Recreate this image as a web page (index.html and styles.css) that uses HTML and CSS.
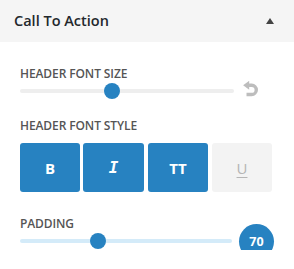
FILE: index.html
```html
<!DOCTYPE html>
<html lang="en">
<head>
    <meta charset="UTF-8">
    <title>Call To Action</title>
    <link rel="stylesheet" href="styles.css">
</head>
<body>
    <div class="panel">
        <div class="panel-head">
            <span class="panel-title">Call To Action</span>
            <span class="caret"></span>
        </div>

        <div class="control">
            <div class="label">HEADER FONT SIZE</div>
            <div class="slider-row">
                <div class="track">
                    <span class="handle" style="left: 84px"></span>
                </div>
                <svg class="reset" width="18" height="18" viewBox="0 0 16 16">
                    <path d="M5.5 3.8 H8.6 A4.1 4.1 0 0 1 8.6 12 H4" fill="none" stroke="#bdbdbd" stroke-width="3"/>
                    <polygon points="1,3.8 6.4,-0.2 6.4,7.8" fill="#bdbdbd"/>
                </svg>
            </div>
        </div>

        <div class="control">
            <div class="label">HEADER FONT STYLE</div>
            <div class="styles">
                <button class="style-btn on bold">B</button>
                <button class="style-btn on italic">I</button>
                <button class="style-btn on caps">TT</button>
                <button class="style-btn under">U</button>
            </div>
        </div>

        <div class="control">
            <div class="label">PADDING</div>
            <div class="slider-row">
                <div class="track blue">
                    <span class="handle" style="left: 70px"></span>
                </div>
                <span class="value">70</span>
            </div>
        </div>
    </div>
</body>
</html>
```

FILE: styles.css
```css
body {
    margin: 0;
    background: #fff;
    font-family: 'Open Sans', sans-serif;
    color: #444;
}

.panel {
    width: 294px;
}

.panel-head {
    height: 42px;
    background: #f5f5f5;
    display: flex;
    align-items: center;
    justify-content: space-between;
    padding: 0 14px;
    box-sizing: border-box;
}

.panel-title {
    font-size: 14.5px;
    font-weight: 600;
    color: #23282d;
    margin-top: -1px;
}

.caret {
    width: 0;
    height: 0;
    border-left: 4.5px solid transparent;
    border-right: 4.5px solid transparent;
    border-bottom: 6px solid #444;
    margin-right: 6px;
}

.control {
    padding: 0 20px;
}

.label {
    font-size: 12px;
    font-weight: 600;
    color: #555;
    letter-spacing: -0.1px;
    line-height: 16px;
}

.control:nth-child(2) .label {
    margin-top: 24px;
}

.control:nth-child(3) .label {
    margin-top: 18px;
}

.control:nth-child(4) .label {
    margin-top: 24px;
}

.slider-row {
    display: flex;
    align-items: center;
    height: 18px;
}

.track {
    position: relative;
    width: 214px;
    height: 4px;
    border-radius: 2px;
    background: #eeeeee;
}

.track.blue {
    background: #d4ebf9;
}

.handle {
    position: absolute;
    top: -6px;
    width: 16px;
    height: 16px;
    border-radius: 50%;
    background: #2782c1;
}

.reset {
    margin-left: 8px;
    margin-top: -2px;
}

.styles {
    display: flex;
    gap: 3px;
    margin-top: 9px;
}

.style-btn {
    width: 60px;
    height: 49px;
    border: 0;
    border-radius: 3px;
    background: #f3f3f3;
    color: #aaa;
    font-family: 'Open Sans', sans-serif;
    font-size: 15px;
    font-weight: 700;
    padding: 0;
}

.style-btn.on {
    background: #2782c1;
    color: #fff;
}

.style-btn.italic {
    font-family: 'DejaVu Sans Mono', monospace;
    font-style: italic;
    font-size: 16px;
    width: 61px;
}

.style-btn.caps {
    margin-left: 1px;
}

.style-btn.under {
    font-weight: 400;
    text-decoration: underline;
    text-underline-offset: 3px;
    color: #b5b5b5;
    margin-left: 1px;
}

.value {
    width: 35px;
    height: 35px;
    border-radius: 50%;
    background: #2782c1;
    color: #fff;
    font-size: 12.5px;
    font-weight: 700;
    display: flex;
    align-items: center;
    justify-content: center;
    margin-left: 7px;
    flex-shrink: 0;
}
```
